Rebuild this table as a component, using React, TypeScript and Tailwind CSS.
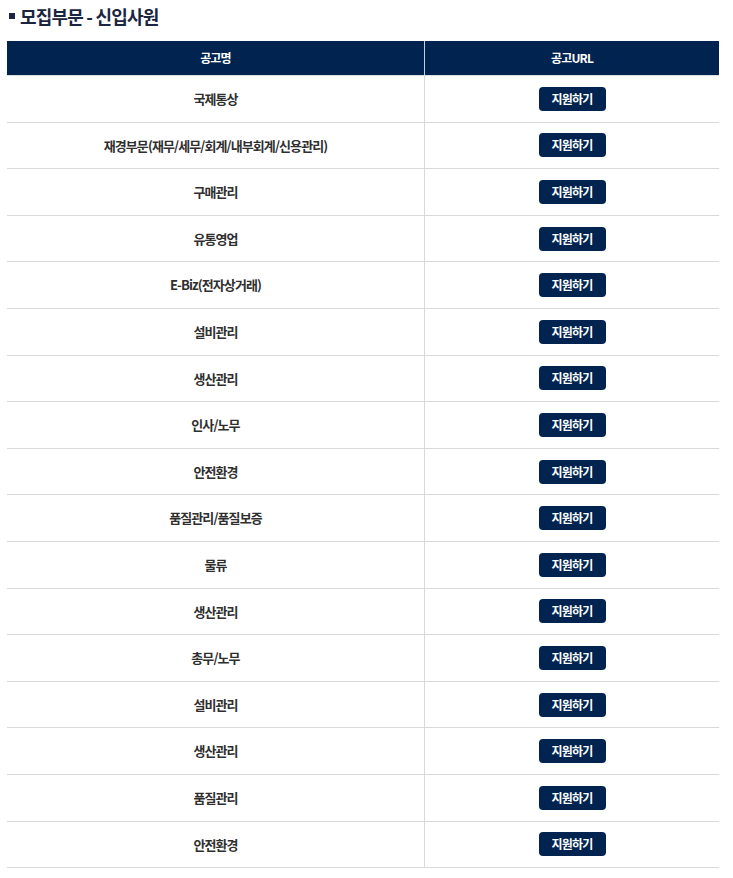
const rows = [
  "국제통상",
  "재경부문(재무/세무/회계/내부회계/신용관리)",
  "구매관리",
  "유통영업",
  "E-Biz(전자상거래)",
  "설비관리",
  "생산관리",
  "인사/노무",
  "안전환경",
  "품질관리/품질보증",
  "물류",
  "생산관리",
  "총무/노무",
  "설비관리",
  "생산관리",
  "품질관리",
  "안전환경",
]

const font = { fontFamily: '"Noto Sans CJK KR", "Noto Sans", sans-serif' }

export default function App() {
  return (
    <div className="bg-white min-h-[878px] pl-[7px] pt-[3px]" style={font}>
      {/* Title */}
      <h2 className="flex items-center h-[26px] text-[18px] font-bold tracking-[-0.8px] text-[#1b2540]">
        <span className="ml-[2px] mr-[5px] inline-block w-[6px] h-[6px] bg-[#1b2540]" />
        모집부문 - 신입사원
      </h2>

      <div className="mt-[12px] w-[712px]">
        {/* Header */}
        <div className="grid grid-cols-[418px_1fr] h-[35px] bg-[#00234f] border-b border-[#dcdcdc] text-white text-[12px] font-bold tracking-[-0.8px]">
          <div className="flex items-center justify-center border-r border-[#c9cfd9]">공고명</div>
          <div className="flex items-center justify-center">공고URL</div>
        </div>

        {/* Rows */}
        {rows.map((name, i) => (
          <div
            key={i}
            className="grid grid-cols-[418px_1fr] h-[46.6px] border-b border-[#d9d9d9]"
          >
            <div className="flex items-center justify-center border-r border-[#d9d9d9] text-[13px] font-bold tracking-[-0.9px] text-[#2f2f2f]">
              {name}
            </div>
            <div className="flex items-center justify-center">
              <button className="w-[67px] h-[24px] rounded-[4px] bg-[#00234f] text-white text-[12px] font-bold tracking-[-0.8px]">
                지원하기
              </button>
            </div>
          </div>
        ))}
      </div>
    </div>
  )
}
